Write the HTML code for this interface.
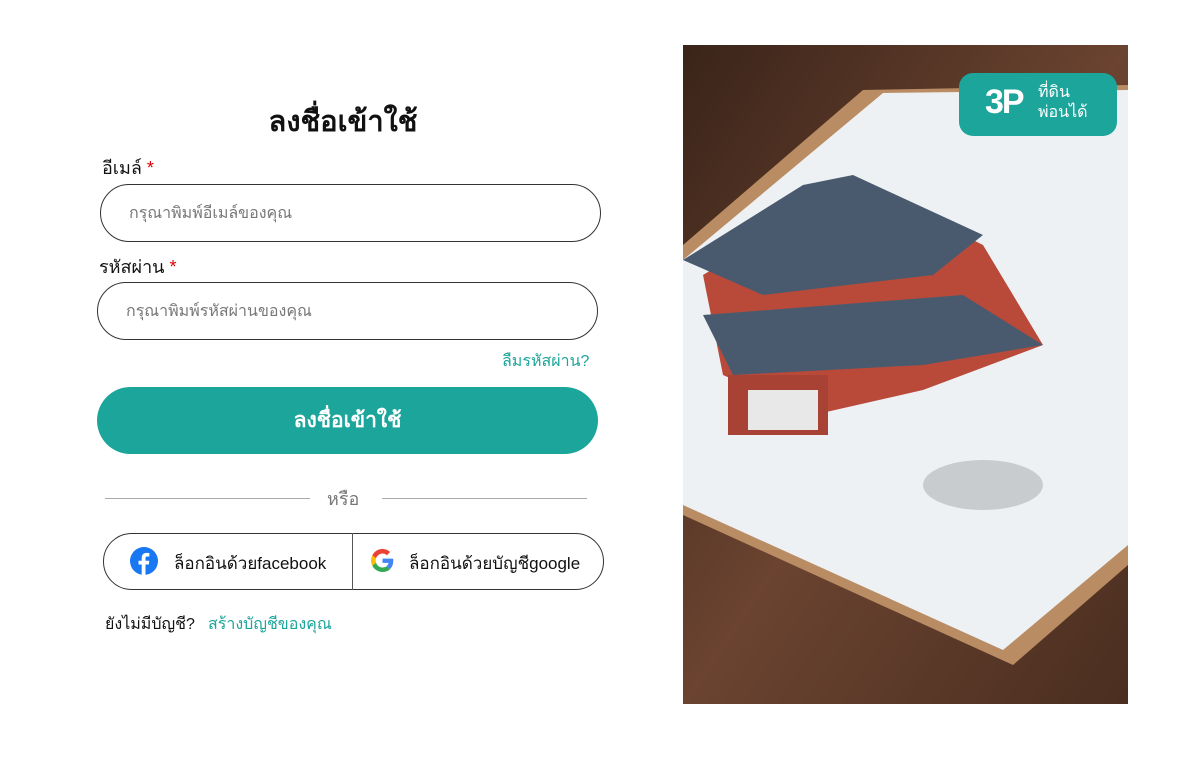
<!DOCTYPE html>
<html><head><meta charset="utf-8"><style>
*{box-sizing:border-box;margin:0;padding:0}
body{width:1202px;height:769px;background:#fff;font-family:"Liberation Sans","DejaVu Sans",sans-serif;position:relative;overflow:hidden;color:#111}
.a{position:absolute}
.inp{border:1px solid #333;border-radius:30px;font-size:16px;color:#777;padding-left:28px;display:flex;align-items:center}
.lbl{font-size:18px}
.req{color:#d00}
</style></head><body>
<div class="a" style="left:143px;top:98px;width:400px;text-align:center;font-size:29px;font-weight:bold">ลงชื่อเข้าใช้</div>
<div class="a lbl" style="left:102px;top:153px">อีเมล์ <span class="req">*</span></div>
<div class="a inp" style="left:100px;top:184px;width:501px;height:58px">กรุณาพิมพ์อีเมล์ของคุณ</div>
<div class="a lbl" style="left:99px;top:252px">รหัสผ่าน <span class="req">*</span></div>
<div class="a inp" style="left:97px;top:282px;width:501px;height:58px">กรุณาพิมพ์รหัสผ่านของคุณ</div>
<div class="a" style="left:502px;top:349px;font-size:16px;color:#1ca59a">ลืมรหัสผ่าน?</div>
<div class="a" style="left:97px;top:387px;width:501px;height:67px;border-radius:34px;background:#1ca59a;color:#fff;font-size:21px;font-weight:bold;display:flex;align-items:center;justify-content:center">ลงชื่อเข้าใช้</div>
<div class="a" style="left:105px;top:498px;width:205px;height:1px;background:#aaa"></div>
<div class="a" style="left:382px;top:498px;width:205px;height:1px;background:#aaa"></div>
<div class="a" style="left:327px;top:484px;font-size:18px;color:#777">หรือ</div>
<div class="a" style="left:103px;top:533px;width:501px;height:57px;border:1px solid #333;border-radius:29px"></div>
<div class="a" style="left:352px;top:533px;width:1px;height:57px;background:#555"></div>
<svg class="a" style="left:130px;top:547px" width="28" height="28" viewBox="0 0 28 28"><circle cx="14" cy="14" r="14" fill="#1877f2"/><path d="M15.5 28V17.5h3.3l.5-3.8h-3.8v-2.4c0-1.1.3-1.8 1.9-1.8h2V6.1c-.4 0-1.6-.2-2.9-.2-2.9 0-4.8 1.7-4.8 5v2.8H8.5v3.8h3.2V28z" fill="#fff"/></svg>
<div class="a" style="left:174px;top:550px;font-size:17px">ล็อกอินด้วยfacebook</div>
<svg class="a" style="left:371px;top:549px" width="23" height="23" viewBox="0 0 48 48"><path fill="#EA4335" d="M24 9.5c3.5 0 6.6 1.2 9.1 3.6l6.8-6.8C35.8 2.4 30.3 0 24 0 14.6 0 6.6 5.4 2.7 13.3l7.9 6.2C12.5 13.6 17.8 9.5 24 9.5z"/><path fill="#4285F4" d="M46.5 24.5c0-1.6-.1-3.1-.4-4.5H24v9h12.7c-.6 2.9-2.2 5.4-4.7 7.1l7.6 5.9c4.4-4.1 6.9-10.100 6.9-17.5z"/><path fill="#FBBC05" d="M10.5 28.6c-.5-1.4-.8-3-.8-4.6s.3-3.2.8-4.6l-7.9-6.2C1 16.5 0 20.1 0 24s1 7.5 2.7 10.8z"/><path fill="#34A853" d="M24 48c6.5 0 11.9-2.1 15.9-5.8l-7.6-5.9c-2.1 1.4-4.9 2.3-8.3 2.3-6.2 0-11.5-4.2-13.4-9.9l-7.9 6.1C6.6 42.6 14.6 48 24 48z"/></svg>
<div class="a" style="left:409px;top:550px;font-size:17px">ล็อกอินด้วยบัญชีgoogle</div>
<div class="a" style="left:105px;top:612px;font-size:16px">ยังไม่มีบัญชี?</div>
<div class="a" style="left:208px;top:612px;font-size:16px;color:#1ca59a">สร้างบัญชีของคุณ</div>

<svg class="a" style="left:683px;top:45px" width="445" height="659" viewBox="0 0 445 659">
<defs><linearGradient id="w" x1="0" y1="0" x2="1" y2="1"><stop offset="0" stop-color="#3a2419"/><stop offset=".5" stop-color="#6b4330"/><stop offset="1" stop-color="#4a2e20"/></linearGradient></defs>
<rect width="445" height="659" fill="url(#w)"/>
<polygon points="180,45 445,40 445,520 330,620 0,470 0,200" fill="#b98c63"/>
<polygon points="200,48 445,45 445,500 320,605 0,460 0,215" fill="#eef1f4"/>
<polygon points="20,230 120,170 200,150 300,200 360,300 240,345 130,370 40,330" fill="#b94a3a"/>
<polygon points="0,215 120,140 170,130 300,190 250,230 80,250" fill="#4a5a6e"/>
<polygon points="20,270 150,260 280,250 360,300 240,320 50,330" fill="#4a5a6e"/>
<rect x="45" y="330" width="100" height="60" fill="#a84234"/>
<rect x="65" y="345" width="70" height="40" fill="#e8e8e8"/>
<ellipse cx="300" cy="440" rx="60" ry="25" fill="#c9cccf"/>
</svg>
<div class="a" style="left:959px;top:73px;width:158px;height:63px;background:#1ca59a;border-radius:14px"></div>
<div class="a" style="left:985px;top:83px;font-size:34px;font-weight:bold;color:#fff;letter-spacing:-2px">3P</div>
<div class="a" style="left:1038px;top:83px;font-size:16px;line-height:20px;color:#fff">ที่ดิน<br>พ่อนได้</div>
</body></html>
